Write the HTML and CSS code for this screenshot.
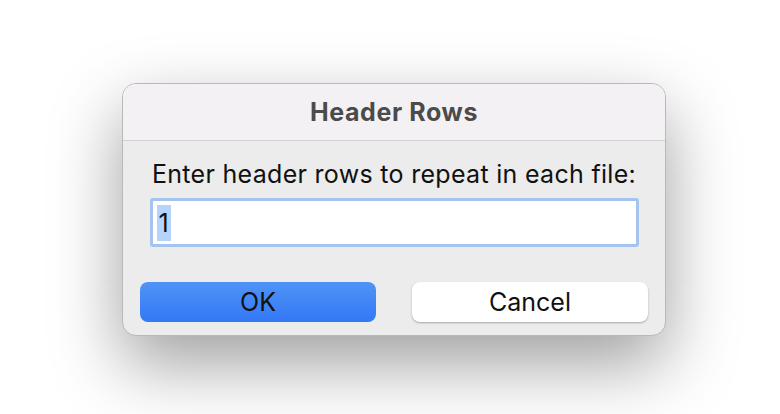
FILE: index.html
```html
<!DOCTYPE html>
<html>
<head>
<meta charset="utf-8">
<link rel="stylesheet" href="styles.css">
</head>
<body>
<div class="stage">
  <div class="dialog">
    <div class="titlebar">Header Rows</div>
    <div class="content">
      <div class="label">Enter header rows to repeat in each file:</div>
      <div class="field"><span class="sel">1</span></div>
      <div class="buttons">
        <div class="btn ok">OK</div>
        <div class="btn cancel">Cancel</div>
      </div>
    </div>
  </div>
</div>
</body>
</html>
```
FILE: styles.css
```css
html, body {
  margin: 0;
  padding: 0;
  background: #ffffff;
  width: 780px;
  height: 414px;
  overflow: hidden;
}
.stage {
  padding: 83px 0 0 122px;
}
.dialog {
  width: 542px;
  height: 251px;
  border: 1px solid #b9b9b9;
  border-radius: 14px;
  background: #ececec;
  overflow: hidden;
  box-shadow: 0 28px 70px rgba(0, 0, 0, 0.38);
  font-family: Inter, "Liberation Sans", Arial, sans-serif;
  display: flex;
  flex-direction: column;
}
.titlebar {
  height: 56px;
  background: #f4f1f5;
  border-bottom: 1px solid #d2d0d3;
  display: flex;
  align-items: center;
  justify-content: center;
  font-weight: 700;
  font-size: 25px;
  letter-spacing: 0.6px;
  color: #4b4b4b;
}
.content {
  display: flex;
  flex-direction: column;
  align-items: center;
  padding-top: 19px;
}
.label {
  font-size: 25px;
  line-height: 28px;
  letter-spacing: 0.3px;
  color: #111;
}
.field {
  margin-top: 10px;
  width: 483px;
  height: 43px;
  background: #fff;
  border: 3px solid #a4c3f1;
  border-radius: 3px;
  box-sizing: content-box;
  display: flex;
  align-items: center;
}
.sel {
  margin-left: 4px;
  background: #b4d4fb;
  font-size: 25px;
  line-height: 36px;
  height: 36px;
  padding: 0 2px;
  color: #111;
}
.buttons {
  margin-top: 35px;
  display: flex;
  gap: 36px;
}
.btn {
  width: 236px;
  height: 40px;
  border-radius: 8px;
  display: flex;
  align-items: center;
  justify-content: center;
  font-size: 25px;
  color: #111;
}
.ok {
  background: linear-gradient(#5093f7, #3378f6);
}
.cancel {
  background: #fff;
  box-shadow: 0 1px 2px rgba(0, 0, 0, 0.3);
}
```
